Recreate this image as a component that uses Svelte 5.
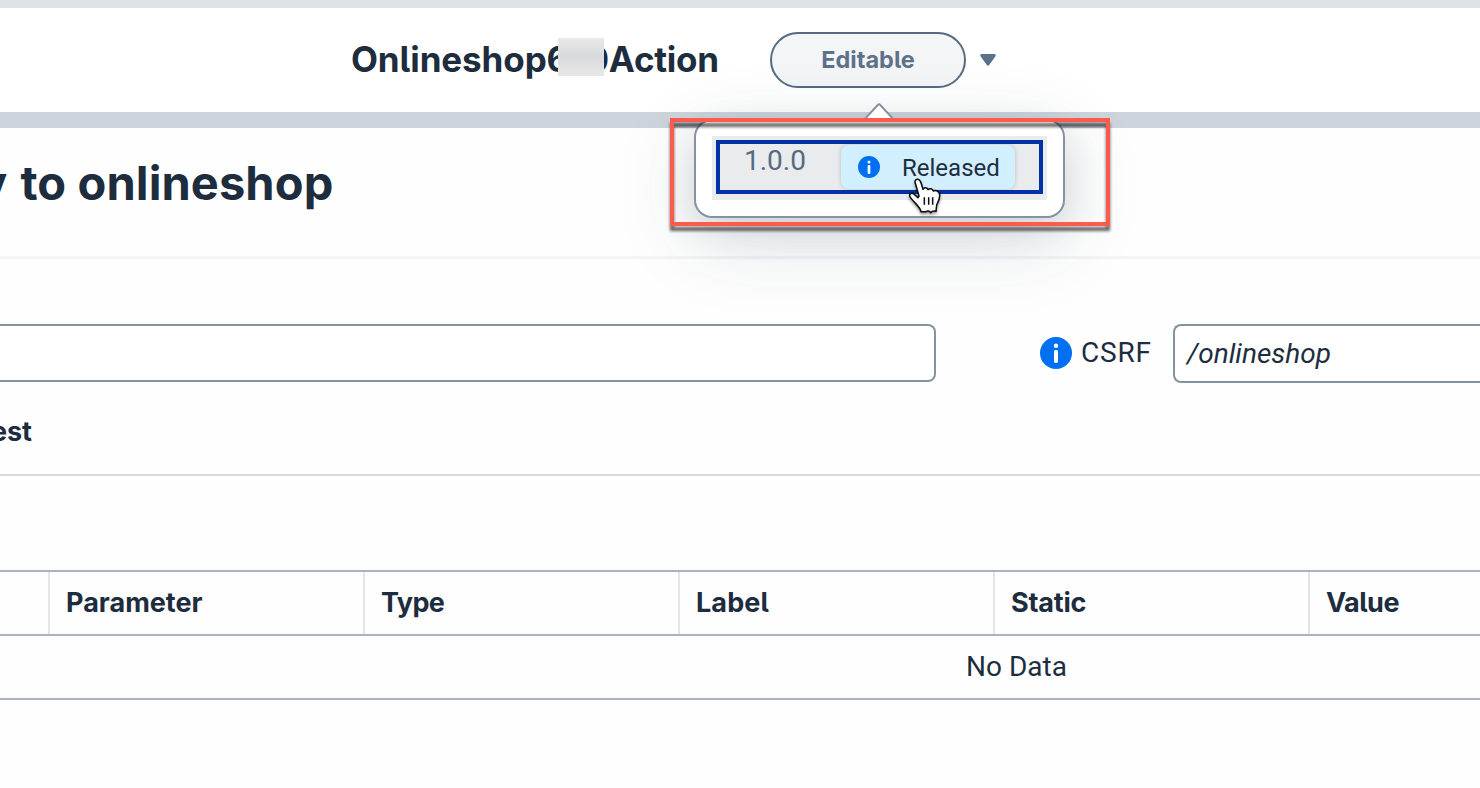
<script>
  const columns = [
    { name: 'Parameter', spacing: 0 },
    { name: 'Type', spacing: -0.6 },
    { name: 'Label', spacing: 0.1 },
    { name: 'Static', spacing: -0.2 },
    { name: 'Value', spacing: -0.5 }
  ];
</script>

{#snippet info(size)}
  <svg width={size} height={size} viewBox="0 0 32 32" aria-hidden="true">
    <circle cx="16" cy="16" r="16" fill="#0070f2" />
    <circle cx="16" cy="8.8" r="2.2" fill="#fff" />
    <rect x="14" y="13" width="4" height="13" rx="1.4" fill="#fff" />
  </svg>
{/snippet}

<div class="page">
  <header>
    <div class="title">
      <span class="first">Onlineshop6</span><span class="mask"></span><span class="last">0Action</span>
    </div>
    <button class="pill">Editable</button>
    <svg class="caret" width="16" height="12" viewBox="0 0 16 12">
      <path d="M1.5 0H14.5Q16.6 .5 15.3 2.5L9.2 11Q8 12.6 6.8 11L.7 2.5Q-.6 .5 1.5 0Z" fill="#5b728b" />
    </svg>
  </header>

  <section class="heading"><h1><span class="lead">y</span>to onlineshop</h1></section>

  <section class="form">
    <div class="input path"></div>
    <div class="label">{@render info(32)}<span>CSRF</span></div>
    <div class="input csrf">/onlineshop</div>
  </section>

  <nav><span class="tab">est</span></nav>

  <div class="table">
    <div class="row head">
      <div class="cell"></div>
      {#each columns as col}
        <div class="cell" style="letter-spacing:{col.spacing}px">{col.name}</div>
      {/each}
    </div>
    <div class="row empty">No Data</div>
  </div>

  <div class="popover">
    <div class="item">
      <div class="focus">
        <span class="version">1.0.0</span>
        <span class="tag">{@render info(22)}<span class="state">Released</span></span>
      </div>
    </div>
  </div>
  <svg class="arrow" width="32" height="18" viewBox="0 0 32 18">
    <path d="M0 18L15 1.8Q16 .8 17 1.8L32 18Z" fill="#fff" />
    <path d="M0 18L15 1.8Q16 .8 17 1.8L32 18" fill="none" stroke="#8792a0" stroke-width="2" />
  </svg>
  <div class="marker"></div>
  <svg class="cursor" width="40" height="42" viewBox="0 0 120 126">
    <path
      d="M25 19C22 9 28 6 33 7C39 8 41 14 43 20L48 37C52 30 61 31 63 38C68 33 76 35 79 42C86 38 97 43 98 53C99 66 94 74 89 84L87 103C80 101 76 101 71 107C67 100 61 101 57 104H42C40 90 24 80 10 61C4 52 14 44 22 52L33 62L36 57Z"
      fill="#fff" stroke="#0b0b0b" stroke-width="4.5" stroke-linejoin="round" />
    <path d="M52 61V83M65 61V83M77 61V83" stroke="#0b0b0b" stroke-width="4.5" />
  </svg>
</div>

<style>
  :global(body) { margin: 0; background: #fefefe; }
  .page {
    position: relative;
    width: 1480px;
    height: 788px;
    overflow: hidden;
    box-sizing: border-box;
    background: #fefefe;
    color: #1d2d3e;
    font-family: Roboto, "Noto Sans", sans-serif;
    font-size: 28px;
    font-feature-settings: "cv05";
  }
  .page :global(*) { box-sizing: border-box; }
  svg { display: block; flex: none; }
  header {
    height: 128px;
    padding-left: 351px;
    display: flex;
    align-items: center;
    border-top: 8px solid #dde1e8;
    border-bottom: 16px solid #cdd4dc;
    background: #fff;
  }
  .title {
    display: flex;
    width: 419px;
    font-family: Inter, Roboto, sans-serif;
    font-size: 35px;
    font-weight: 700;
    line-height: 46px;
    white-space: nowrap;
  }
  .first { width: 207px; height: 48px; letter-spacing: -0.1px; }
  .mask {
    position: relative;
    width: 46px;
    height: 38px;
    margin-top: 2px;
    background: linear-gradient(#e9e9ea, #d9dadc 45%, #dcdddf 60%, #e8e8e8);
  }
  .last { margin-left: -18.5px; letter-spacing: -0.25px; }
  .pill {
    width: 196px;
    height: 56px;
    padding: 0 0 2px;
    border: 2px solid #556b82;
    border-radius: 28px;
    background: #f4f5f7;
    color: #5d728a;
    font: 700 23.5px Inter, Roboto, sans-serif;
    font-feature-settings: "cv05";
  }
  .caret { margin-left: 14px; }
  .heading {
    height: 131px;
    padding-bottom: 18px;
    display: flex;
    align-items: center;
    border-bottom: 3px solid #f3f5f6;
  }
  h1 { margin: 0; display: flex; font: 700 47px/56px Inter, Roboto, sans-serif; letter-spacing: 0.1px; white-space: nowrap; }
  .lead { width: 20.5px; display: flex; justify-content: flex-end; padding-right: 13px; }
  .form { height: 124px; padding-top: 65px; display: flex; }
  .input { border: 2px solid #8592a0; background: #fff; }
  .path { width: 936px; height: 58px; border-left: 0; border-radius: 0 8px 8px 0; }
  .label { width: 237px; height: 58px; padding-left: 104px; display: flex; align-items: center; gap: 9px; letter-spacing: 0.8px; }
  .label span { line-height: 32px; padding-bottom: 1px; }
  .csrf {
    width: 307px;
    height: 59px;
    padding-left: 12px;
    border-right: 0;
    border-radius: 8px 0 0 8px;
    font-style: italic;
    line-height: 55px;
  }
  nav { height: 93px; padding-top: 32px; border-bottom: 2px solid #d9d9d9; }
  .tab { display: flex; justify-content: flex-end; width: 32px; font: 700 27px/34px Inter, Roboto, sans-serif; }
  .table { margin-top: 94px; border-top: 2px solid #a8b3bf; }
  .row { border-bottom: 2px solid #a8b3bf; line-height: 62px; }
  .head {
    display: grid;
    grid-template-columns: 50px repeat(5, 315px);
    height: 64px;
    font-family: Inter, Roboto, sans-serif;
    font-size: 27px;
    font-weight: 700;
  }
  .cell { padding-left: 16px; border-right: 2px solid #e5e5e5; }
  .empty { height: 64px; padding-left: 966px; }
  .popover {
    position: absolute;
    left: 694px;
    top: 119px;
    width: 371px;
    height: 99px;
    padding: 15px 16px;
    border: 2px solid #8792a0;
    border-radius: 18px;
    background: #fff;
    box-shadow: 0 20px 80px rgba(34, 53, 72, 0.16), 0 12px 36px rgba(34, 43, 60, 0.11);
  }
  .item { width: 335px; height: 64px; padding: 4px; background: #eaebed; }
  .focus { width: 327px; height: 54px; padding: 1px 0 0 24px; display: flex; border: 4px solid #0032a5; }
  .version { width: 97px; line-height: 32px; color: #556b82; }
  .tag {
    width: 174px;
    height: 44px;
    padding-left: 17px;
    display: flex;
    align-items: center;
    gap: 22px;
    border-radius: 8px;
    background: #d1efff;
    box-shadow: 0 0 4px rgba(34, 53, 72, 0.25);
    font-size: 24px;
  }
  .state { padding-top: 2px; }
  .arrow { position: absolute; left: 863px; top: 103px; }
  .marker {
    position: absolute;
    left: 670px;
    top: 118px;
    width: 440px;
    height: 108px;
    border: 4px solid #ff5a4b;
    filter: drop-shadow(0 5px 1.5px rgba(0, 0, 0, 0.6));
  }
  .cursor { position: absolute; left: 907px; top: 177px; filter: drop-shadow(0 2px 1.5px rgba(0, 0, 0, 0.4)); }
</style>
